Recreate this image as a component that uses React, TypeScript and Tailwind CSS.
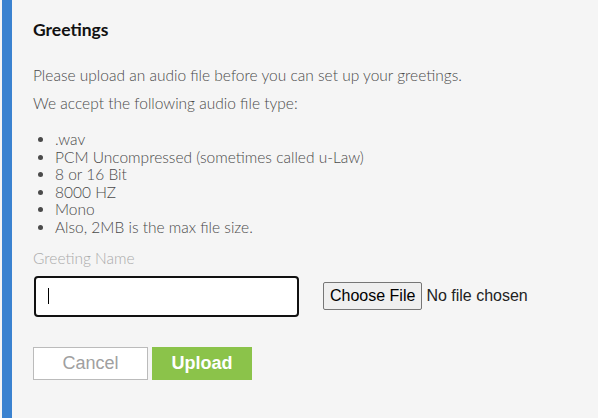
import React from 'react';

const items = [
    '.wav',
    'PCM Uncompressed (sometimes called u-Law)',
    '8 or 16 Bit',
    '8000 HZ',
    'Mono',
    'Also, 2MB is the max file size.',
];

export default function App() {
    return (
        <div className="w-[598px] h-[418px] bg-[#f5f5f5] flex overflow-hidden" style={{ fontFamily: 'Lato, sans-serif' }}>
            {/* left accent bar */}
            <div className="w-[12px] h-full pl-[2px] bg-[#f5f5f5]">
                <div className="w-[10px] h-full bg-[#3a82d0]"></div>
            </div>

            <div className="flex-1 pl-[21px] pt-[19px]">
                <h2 className="text-[17.5px] font-bold text-[#111] leading-[22px]">Greetings</h2>

                <p className="mt-[25px] text-[15.5px] font-light text-[#4a4a4a] leading-[18px]">
                    Please upload an audio file before you can set up your greetings.
                </p>
                <p className="mt-[10px] text-[15.5px] font-light text-[#4a4a4a] leading-[18px]">
                    We accept the following audio file type:
                </p>

                <ul className="mt-[19px] list-disc pl-[22px] text-[15.5px] font-light text-[#4a4a4a] leading-[17.6px]">
                    {items.map((item) => (
                        <li key={item}>{item}</li>
                    ))}
                </ul>

                <div className="mt-[12px] text-[15.5px] font-light text-[#aaa] leading-[18px]">Greeting Name</div>

                <div className="mt-[9px] flex items-center">
                    <div className="ml-[1px] w-[265px] h-[41px] bg-white border-2 border-[#111] rounded-[4px] flex items-center pl-[12px]">
                        <div className="w-[1px] h-[16px] bg-black"></div>
                    </div>
                    <input
                        type="file"
                        className="ml-[24px] text-[16px] text-[#222] file:mr-[4px] file:px-[6px] file:py-[1px] file:border file:border-[#767676] file:rounded-[2px] file:bg-[#efefef] file:text-[16px] file:text-black"
                        style={{ fontFamily: 'Arial, "Liberation Sans", sans-serif' }}
                    />
                </div>

                <div className="mt-[30px] flex gap-[4px]" style={{ fontFamily: 'Arial, "Liberation Sans", sans-serif' }}>
                    <button className="w-[115px] h-[33px] bg-white border border-[#bbb] text-[18px] text-[#a0a0a0]">Cancel</button>
                    <button className="w-[100px] h-[33px] bg-[#8bc34a] text-[18px] font-bold text-white">Upload</button>
                </div>
            </div>
        </div>
    );
}
